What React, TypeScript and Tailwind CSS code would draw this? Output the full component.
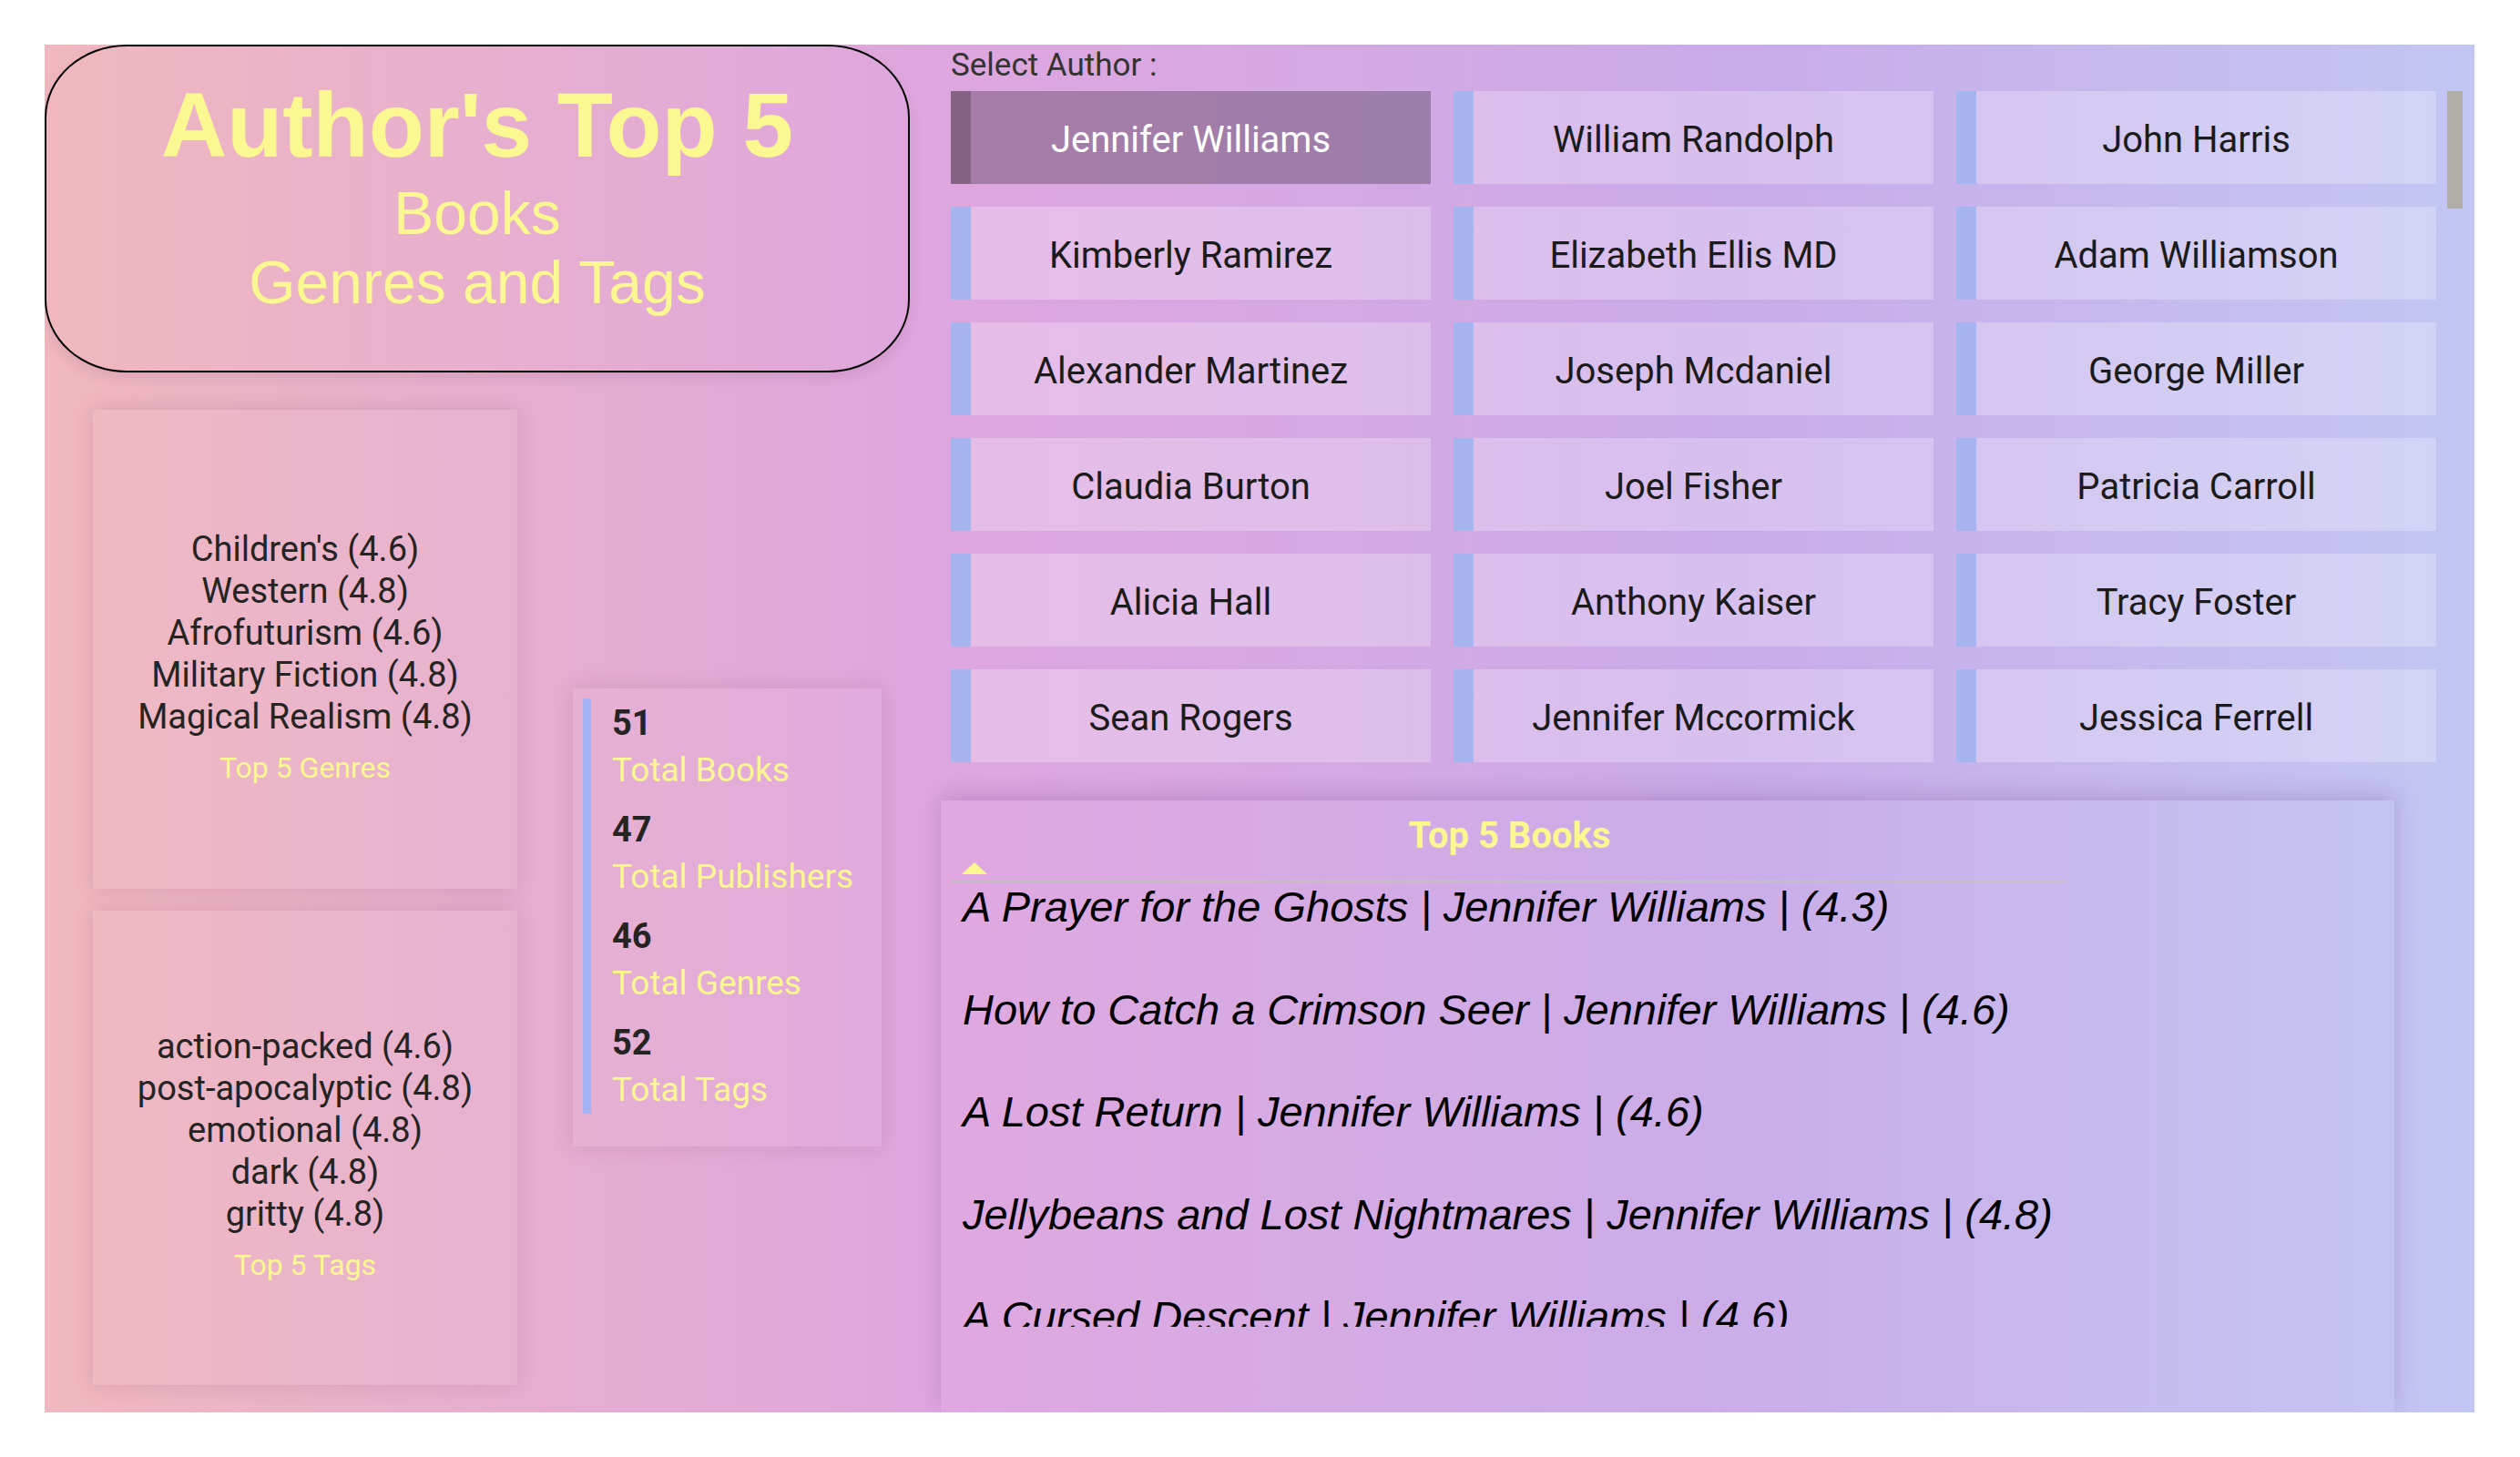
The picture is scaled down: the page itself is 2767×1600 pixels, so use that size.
import React from "react";

const authors = [
  "Jennifer Williams", "William Randolph", "John Harris",
  "Kimberly Ramirez", "Elizabeth Ellis MD", "Adam Williamson",
  "Alexander Martinez", "Joseph Mcdaniel", "George Miller",
  "Claudia Burton", "Joel Fisher", "Patricia Carroll",
  "Alicia Hall", "Anthony Kaiser", "Tracy Foster",
  "Sean Rogers", "Jennifer Mccormick", "Jessica Ferrell",
];

const genres = [
  "Children's (4.6)",
  "Western (4.8)",
  "Afrofuturism (4.6)",
  "Military Fiction (4.8)",
  "Magical Realism (4.8)",
];

const tags = [
  "action-packed (4.6)",
  "post-apocalyptic (4.8)",
  "emotional (4.8)",
  "dark (4.8)",
  "gritty (4.8)",
];

const stats = [
  { value: "51", label: "Total Books" },
  { value: "47", label: "Total Publishers" },
  { value: "46", label: "Total Genres" },
  { value: "52", label: "Total Tags" },
];

const books = [
  "A Prayer for the Ghosts | Jennifer Williams | (4.3)",
  "How to Catch a Crimson Seer | Jennifer Williams | (4.6)",
  "A Lost Return | Jennifer Williams | (4.6)",
  "Jellybeans and Lost Nightmares | Jennifer Williams | (4.8)",
  "A Cursed Descent | Jennifer Williams | (4.6)",
];

const din = "font-['Roboto','Liberation_Sans',sans-serif]";
const arial = "font-['Liberation_Sans','Arial',sans-serif]";

// list card used for top genres / top tags
const ListCard: React.FC<{ items: string[]; caption: string; height: string; pad: string }> = ({
  items,
  caption,
  height,
  pad,
}) => (
  <div
    className={`w-[466px] ${height} ${pad} bg-white/[0.04] shadow-[0_0_22px_rgba(120,60,90,0.18)] flex flex-col items-center ${din}`}
  >
    {items.map((g) => (
      <div key={g} className="text-[38px] leading-[46px] text-[#252423]">
        {g}
      </div>
    ))}
    <div className="mt-[13px] text-[32px] leading-[40px] text-[#fbf791]">{caption}</div>
  </div>
);

export default function App() {
  return (
    <div className="w-[2767px] h-[1600px] bg-white pt-[49px] pl-[49px]">
      <div className="w-[2668px] h-[1502px] overflow-hidden flex bg-[linear-gradient(90deg,#f0b8be_0%,#dfa6de_36%,#c9abe9_70%,#c2c6f3_100%)]">
        {/* left column */}
        <div className="w-[984px] shrink-0 flex flex-col">
          <div className="w-[950px] h-[360px] border-2 border-black rounded-[90px/80px] shadow-[0_6px_14px_rgba(90,40,80,0.12)] flex flex-col items-center pt-[36px]">
            <div className={`${arial} font-bold text-[100px] leading-[100px] text-[#fbf791]`}>Author's Top 5</div>
            <div className={`${arial} mt-[9px] text-[66px] leading-[76px] text-[#fbf791] text-center`}>
              Books
              <br />
              Genres and Tags
            </div>
          </div>

          <div className="flex mt-[41px] ml-[53px]">
            <div className="flex flex-col gap-[24px]">
              <ListCard items={genres} caption="Top 5 Genres" height="h-[526px]" pad="pt-[130px]" />
              <ListCard items={tags} caption="Top 5 Tags" height="h-[521px]" pad="pt-[126px]" />
            </div>

            <div className="ml-[61px] mt-[306px] w-[339px] h-[503px] bg-white/[0.04] shadow-[0_0_22px_rgba(120,60,90,0.18)] pt-[11px] pl-[11px]">
              <div className={`border-l-[9px] border-[#a5b4f5] pl-[23px] pt-[3px] pb-[1px] flex flex-col gap-[16px] ${din}`}>
                {stats.map((s) => (
                  <div key={s.label}>
                    <div className="text-[38px] leading-[48px] font-bold text-[#252423]">{s.value}</div>
                    <div className="mt-[2px] text-[37px] leading-[51px] text-[#fbf791]">{s.label}</div>
                  </div>
                ))}
              </div>
            </div>
          </div>
        </div>

        {/* right column */}
        <div className="flex-1 flex flex-col">
          <div className="pl-[11px]">
            <div className={`${din} h-[51px] pt-[3px] text-[35px] leading-[40px] text-[#333]`}>Select Author :</div>
            <div className="flex">
              <div className="h-[737px] overflow-hidden">
                <div className="grid grid-cols-[527px_527px_527px] gap-[25px]">
                  {authors.map((a, i) => {
                    const selected = i === 0;
                    return (
                      <div
                        key={a}
                        className={`h-[102px] flex ${selected ? "bg-black/25" : "bg-white/25"}`}
                      >
                        <div className={`w-[22px] shrink-0 ${selected ? "bg-black/20" : "bg-[#a6b5ef]"}`} />
                        <div
                          className={`flex-1 flex items-center justify-center pr-[22px] pt-[5px] ${din} text-[40px] ${
                            selected ? "text-white" : "text-[#1c1b1b]"
                          }`}
                        >
                          {a}
                        </div>
                      </div>
                    );
                  })}
                </div>
              </div>
              <div className="ml-[12px] w-[17px] h-[129px] bg-[#b0ada8]" />
            </div>
          </div>

          <div className="mt-[42px] w-[1596px] flex-1 bg-white/[0.03] shadow-[0_-6px_22px_rgba(90,40,110,0.2)] pl-[12px]">
            <div className="w-[1225px]">
              <div className={`${din} pt-[17px] h-[60px] text-center font-bold text-[40px] leading-[44px] text-[#fbf791]`}>
                Top 5 Books
              </div>
              <div className="h-[28px] pt-[8px] pl-[11px]">
                <svg width="28" height="13" viewBox="0 0 28 13">
                  <polygon points="14,0 28,13 0,13" fill="#fbf791" />
                </svg>
              </div>
              <div className="h-[2px] bg-[#c4c0c4]" />
              <div className="h-[488px] overflow-hidden pl-[12px] flex flex-col gap-[58.5px]">
                {books.map((b) => (
                  <div key={b} className={`${arial} italic text-[47px] leading-[54px] text-black whitespace-nowrap`}>
                    {b}
                  </div>
                ))}
              </div>
            </div>
          </div>
        </div>
      </div>
    </div>
  );
}
